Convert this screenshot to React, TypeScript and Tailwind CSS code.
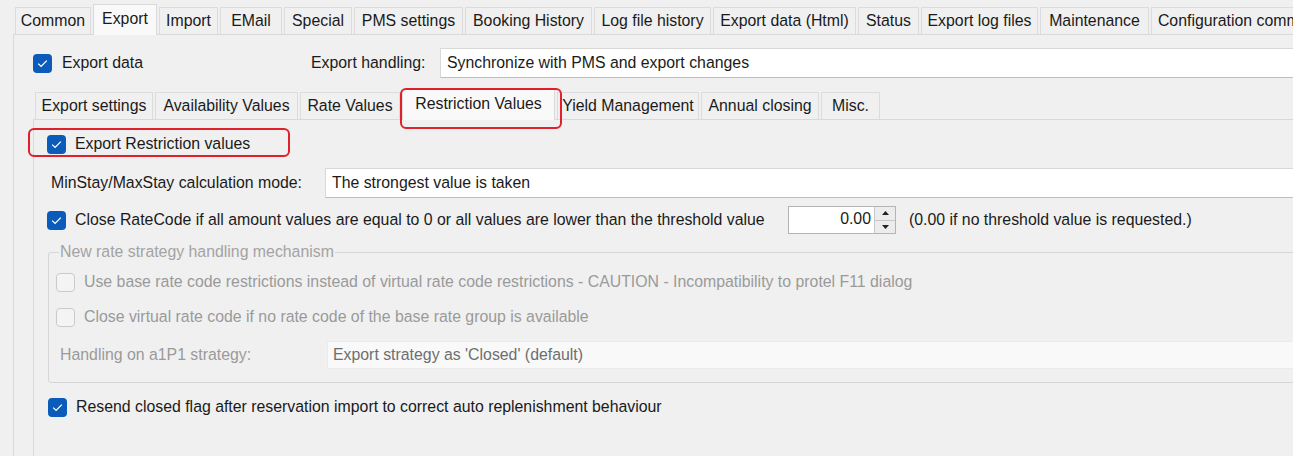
import React from "react";

const FONT = "font-['Liberation_Sans',Arial,sans-serif]";

const topTabs: [string, number, boolean?][] = [
  ["Common", 76],
  ["Export", 64, true],
  ["Import", 59],
  ["EMail", 62],
  ["Special", 68],
  ["PMS settings", 109],
  ["Booking History", 127],
  ["Log file history", 117],
  ["Export data (Html)", 143],
  ["Status", 61],
  ["Export log files", 117],
  ["Maintenance", 109],
  ["Configuration commands", 190],
];

const innerTabs: [string, number, boolean?][] = [
  ["Export settings", 118],
  ["Availability Values", 143],
  ["Rate Values", 100],
  ["Restriction Values", 153, true],
  ["Yield Management", 142],
  ["Annual closing", 118],
  ["Misc.", 59],
];

function Checked() {
  return (
    <span className="w-[19px] h-[19px] rounded-[4px] bg-[#0b5cba] flex items-center justify-center shrink-0">
      <svg width="11" height="9" viewBox="0 0 11 9">
        <path d="M1.2 4.6 L4.1 7.4 L9.8 1.6" stroke="white" strokeWidth="1.3" fill="none" />
      </svg>
    </span>
  );
}

function Unchecked() {
  return (
    <span className="w-[19px] h-[19px] rounded-[4px] border border-[#cacaca] bg-[#f4f4f4] shrink-0" />
  );
}

function Tab({ label, w, selected, outline }: { label: string; w: number; selected?: boolean; outline?: boolean }) {
  return (
    <div
      style={{ width: w }}
      className={
        selected
          ? "relative z-10 shrink-0 mr-[2px] h-[31px] -mb-px pb-[2px] bg-[#f9f9f9] border-x border-t border-[#d9d9d9] flex items-center justify-center whitespace-nowrap"
          : "shrink-0 mr-[2px] h-[27px] bg-[#f0f0f0] border-x border-t border-[#dcdcdc] flex items-center justify-center whitespace-nowrap"
      }
    >
      {label}
      {outline && (
        <span className="absolute left-[-3px] top-[-2px] w-[162px] h-[41px] border-2 border-[#e0202a] rounded-[6px]" />
      )}
    </div>
  );
}

export default function App() {
  return (
    <div className={`${FONT} w-[1293px] h-[456px] overflow-hidden bg-[#f0f0f0] text-[15.85px] text-[#1a1a1a] leading-[20px]`}>
      {/* top tab strip */}
      <div className="flex items-end h-[34px] pl-[15px] flex-nowrap">
        {topTabs.map(([l, w, s]) => (
          <Tab key={l} label={l} w={w} selected={s} />
        ))}
      </div>

      {/* outer panel */}
      <div className="ml-[13px] w-[1340px] h-[430px] border-l border-t border-[#d9d9d9] bg-[#f0f0f0]">
        {/* Export data row */}
        <div className="flex items-center mt-[13px] h-[30px] pl-[19px]">
          <div className="w-[278px] flex items-center gap-[10px]">
            <Checked />
            <span>Export data</span>
          </div>
          <span className="w-[129px] whitespace-nowrap">Export handling:</span>
          <div className="flex-1 h-[30px] bg-white border border-[#d8d8d8] border-b-[#bdbdbd] flex items-center pl-[6px]">
            Synchronize with PMS and export changes
          </div>
        </div>

        <div className="ml-[19px]">
          {/* inner tabs */}
          <div className="flex items-end h-[41px] pl-[2px]">
            {innerTabs.map(([l, w, s]) => (
              <Tab key={l} label={l} w={w} selected={s} outline={s} />
            ))}
          </div>

          {/* inner panel */}
          <div className="border-l border-t border-[#d9d9d9] h-[340px]">
            {/* Export Restriction values */}
            <div className="relative flex items-center h-[20px] mt-[14px] pl-[13px] gap-[9px]">
              <span className="absolute left-[-6px] top-[-6px] w-[262px] h-[29px] border-2 border-[#e0202a] rounded-[6px]" />
              <Checked />
              <span>Export Restriction values</span>
            </div>

            {/* MinStay */}
            <div className="flex items-center h-[30px] mt-[14px] pl-[17px]">
              <span className="w-[274px] whitespace-nowrap">MinStay/MaxStay calculation mode:</span>
              <div className="flex-1 h-[30px] bg-white border border-[#d8d8d8] border-b-[#bdbdbd] flex items-center pl-[6px]">
                The strongest value is taken
              </div>
            </div>

            {/* Close RateCode */}
            <div className="flex items-center h-[28px] mt-[8px] pl-[13px]">
              <Checked />
              <span className="ml-[9px] w-[713px] whitespace-nowrap">
                Close RateCode if all amount values are equal to 0 or all values are lower than the threshold value
              </span>
              <div className="w-[108px] h-[28px] bg-white border border-[#b4b4b4] flex">
                <span className="flex-1 text-right pr-[3px] leading-[24px]">0.00</span>
                <div className="w-[21px] flex flex-col border-l border-[#c8c8c8]">
                  <div className="flex-1 bg-[#ececec] border-b border-[#c8c8c8] flex items-center justify-center">
                    <svg width="7" height="4" viewBox="0 0 7 4"><path d="M0 4 L3.5 0 L7 4 Z" fill="#222" /></svg>
                  </div>
                  <div className="flex-1 bg-[#ececec] flex items-center justify-center">
                    <svg width="7" height="4" viewBox="0 0 7 4"><path d="M0 0 L3.5 4 L7 0 Z" fill="#222" /></svg>
                  </div>
                </div>
              </div>
              <span className="ml-[13px] whitespace-nowrap">(0.00 if no threshold value is requested.)</span>
            </div>

            {/* group box */}
            <fieldset className="ml-[14px] mt-[9px] border border-[#d6d6d6] rounded-[3px] pl-[7px] pb-[13px]">
              <legend className="ml-[3px] px-[1px] leading-[18px] text-[#a3a3a3]">
                New rate strategy handling mechanism
              </legend>
              <div className="flex items-center h-[20px] mt-[11px] gap-[9px] text-[#9a9a9a]">
                <Unchecked />
                <span className="whitespace-nowrap">
                  Use base rate code restrictions instead of virtual rate code restrictions - CAUTION - Incompatibility to protel F11 dialog
                </span>
              </div>
              <div className="flex items-center h-[20px] mt-[15px] gap-[9px] text-[#9a9a9a]">
                <Unchecked />
                <span className="whitespace-nowrap">
                  Close virtual rate code if no rate code of the base rate group is available
                </span>
              </div>
              <div className="flex items-center h-[28px] mt-[14px] pl-[4px]">
                <span className="w-[267px] whitespace-nowrap text-[#9a9a9a]">Handling on a1P1 strategy:</span>
                <div className="flex-1 h-[28px] bg-[#f9f9f9] border border-[#ebebeb] flex items-center pl-[5px] text-[#6e6e6e]">
                  Export strategy as 'Closed' (default)
                </div>
              </div>
            </fieldset>

            {/* Resend */}
            <div className="flex items-center h-[20px] mt-[14px] pl-[14px] gap-[9px]">
              <Checked />
              <span className="whitespace-nowrap">
                Resend closed flag after reservation import to correct auto replenishment behaviour
              </span>
            </div>
          </div>
        </div>
      </div>
    </div>
  );
}
